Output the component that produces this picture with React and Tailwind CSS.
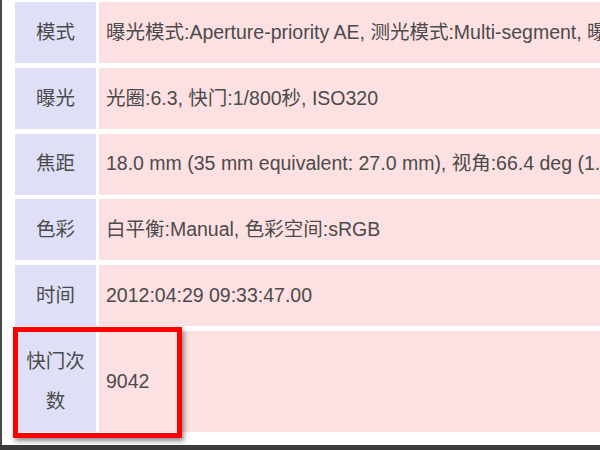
const rows = [
  { label: "模式", value: "曝光模式:Aperture-priority AE, 测光模式:Multi-segment, 曝光补偿:0 EV" },
  { label: "曝光", value: "光圈:6.3, 快门:1/800秒, ISO320" },
  { label: "焦距", value: "18.0 mm (35 mm equivalent: 27.0 mm), 视角:66.4 deg (1.0 m)" },
  { label: "色彩", value: "白平衡:Manual, 色彩空间:sRGB" },
  { label: "时间", value: "2012:04:29 09:33:47.00" },
];

export default function App() {
  return (
    <div
      className="relative w-[600px] h-[450px] flex flex-col bg-white overflow-hidden text-[#4b4b4b]"
      style={{ fontFamily: '"Liberation Sans", "Noto Sans CJK SC", sans-serif' }}
    >
      <div className="flex-1 flex border-l-2 border-[#474747] overflow-hidden">
        <div className="flex-1 flex flex-col gap-[4.8px] pt-[2px] pl-[13px] text-[19.5px]">
          {rows.map((r) => (
            <div key={r.label} className="flex gap-[3px] h-[61px] shrink-0">
              <div className="w-[81px] shrink-0 bg-[#dfe0f8] flex items-center justify-center">
                {r.label}
              </div>
              <div className="flex-1 bg-[#fde0e1] flex items-center pl-[7px] whitespace-nowrap overflow-hidden">
                {r.value}
              </div>
            </div>
          ))}
          <div className="flex gap-[3px] h-[101px] shrink-0">
            <div className="w-[81px] shrink-0 bg-[#dfe0f8] flex items-center justify-center px-[10px] text-center leading-[40px]">
              快门次数
            </div>
            <div className="flex-1 bg-[#fde0e1] flex items-center pl-[7px]">9042</div>
          </div>
        </div>
      </div>
      <div className="h-[5px] bg-[#3b3b3b] shrink-0" />
      <div className="absolute left-[13px] top-[327px] w-[169px] h-[111px] border-[5px] border-[#ff0000] shadow-[2px_3px_5px_rgba(0,0,0,0.45)]" />
    </div>
  );
}
